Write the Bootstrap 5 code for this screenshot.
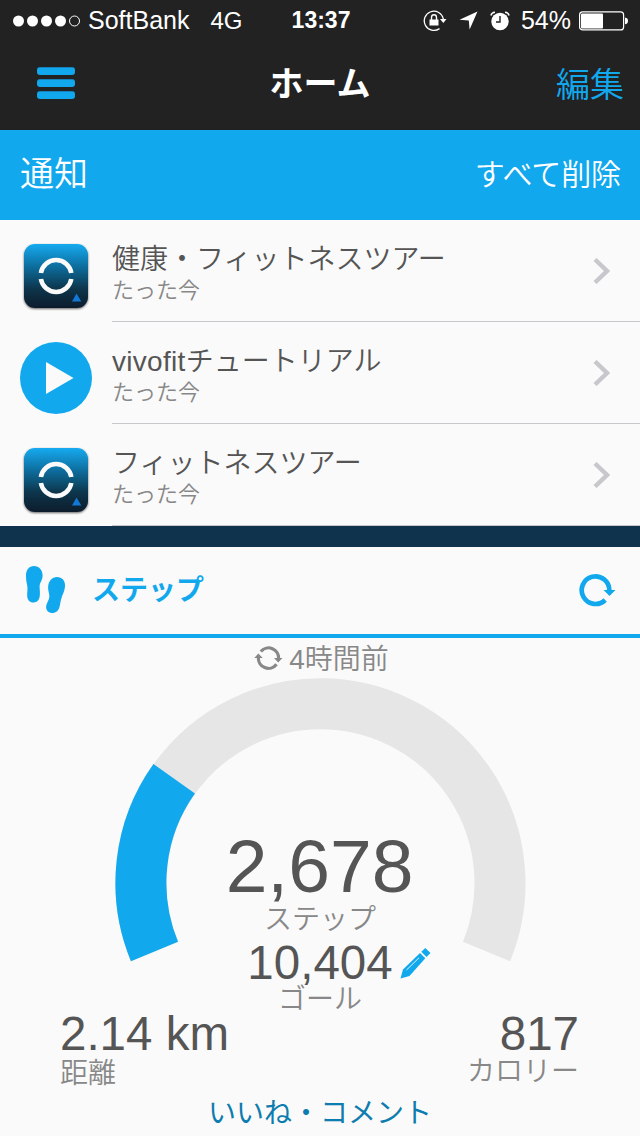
<!DOCTYPE html>
<html lang="ja">
<head>
<meta charset="utf-8">
<meta name="viewport" content="width=device-width, initial-scale=1">
<title>ホーム</title>
<link href="https://cdn.jsdelivr.net/npm/bootstrap@5.3.0/dist/css/bootstrap.min.css" rel="stylesheet">
<style>
:root { --sky: #11a8ee; --ink: #555; --soft: #888; --paper: #fafafa; --bar: #222; }
body { font-family: "Liberation Sans", "Noto Sans CJK JP", sans-serif; background: var(--paper); color: var(--ink); height: 1136px; overflow: hidden; font-size: 28px; line-height: 1; }
svg { display: block; flex: none; }
.jp-light { font-weight: 350; }
.statusbar { height: 40px; background: var(--bar); color: #fff; font-size: 24px; padding: 1px 11px 0 13px; }
.statusbar .side { flex: 1 1 0; }
.carrier { font-size: 25px; margin-left: 7px; }
.network { margin-left: 21px; }
.clock { font-size: 23px; }
.status-icons { gap: 12px; margin-right: 11px; }
.charge { font-size: 25px; margin-right: 8px; }
.topbar { height: 90px; background: var(--bar); padding: 0 16px 5px; }
.topbar .side { flex: 1 1 0; }
.topbar h1 { font-size: 34px; font-weight: 700; color: #fff; padding-top: 3px; }
.edit { font-size: 34px; color: var(--sky); padding-top: 4px; }
.burger { margin-left: 21px; }
.burger span { display: block; width: 38px; height: 8px; border-radius: 3px; background: var(--sky); border-top: 1px solid #1583bb; }
.notice-head { height: 90px; background: var(--sky); color: #fff; padding: 0 19px 3px 20px; font-size: 34px; }
.notice-head .clear-all { font-size: 30px; margin-top: 3px; letter-spacing: -.1px; }
.notice { height: 102px; padding-left: 20px; }
.notice .thumb { width: 72px; margin-right: 20px; padding-top: 20px; }
.notice .copy { height: 102px; border-bottom: 1px solid #c8c7cc; padding: 26px 30px 0 0; }
.notice .when { font-size: 22px; color: var(--soft); margin-top: 6px; }
.notice .chevron { margin-top: 12px; }
.latin { letter-spacing: .3px; }
.divider { height: 21px; background: #10334d; }
.step-head { height: 91px; border-bottom: 4px solid var(--sky); padding: 0 24px 2px 25px; color: var(--sky); }
.step-head h2 { font-size: 28px; font-weight: 700; margin-left: 26px; padding-top: 3px; }
.soft { color: var(--soft); }
.synced { height: 40px; gap: 6px; padding-left: 3px; }
.synced span { padding-top: 3px; }
.dial { display: grid; height: 332px; }
.dial > * { grid-area: 1 / 1; }
.readout { padding-top: 150px; }
.count { font-size: 75px; height: 78px; line-height: 76px; padding-right: 1px; }
.goal { display: grid; grid-template-columns: 1fr auto 1fr; align-items: center; font-size: 47.5px; height: 48px; line-height: 48px; margin-top: 5px; }
.goal-number { grid-column: 2; }
.goal-label { margin-top: -1px; }
.pencil { margin-left: 7px; }
.totals { padding: 0 61px 0 60px; height: 80px; }
.totals .figure { font-size: 47.500px; line-height: 48px; }
.distance { padding-top: 2px; }
.social { color: #0d7cae; height: 46px; padding-top: 2px; }
</style>
</head>
<body>
<header>
  <div class="statusbar d-flex align-items-center">
    <div class="side d-flex align-items-center">
      <svg width="68" height="12" fill="#fff"><circle cx="5.5" cy="6" r="5.5"/><circle cx="19.5" cy="6" r="5.5"/><circle cx="33.5" cy="6" r="5.5"/><circle cx="47.5" cy="6" r="5.5"/><circle cx="61.5" cy="6" r="5" fill="none" stroke="#fff"/></svg>
      <span class="carrier">SoftBank</span><span class="network">4G</span>
    </div>
    <strong class="clock">13:37</strong>
    <div class="side d-flex align-items-center justify-content-end">
      <div class="status-icons d-flex align-items-center">
        <svg width="24" height="22" viewBox="0 0 24 22" fill="none" stroke="#fff"><path d="M20.300 9A9.600 9.600 0 1 0 16.500 18.600" stroke-width="1.300"/><path d="M17 9h6.500l-3.200 4z" fill="#fff" stroke="none"/><rect x="6.500" y="9.500" width="9" height="6" fill="#fff" stroke="none"/><path d="M8.500 10V7.500a2.500 2.700 0 0 1 5 0V10" stroke-width="1.400"/></svg>
        <svg width="19" height="19" viewBox="0 0 19 19" fill="#fff"><path d="M18.500.5 10.600 18.500 9.800 9.500.5 8.800z"/></svg>
        <svg width="20" height="20" viewBox="0 0 20 20"><circle cx="10" cy="10.500" r="8.700" fill="#fff"/><path d="M10 5v6H6" fill="none" stroke="#222" stroke-width="1.400"/><path d="M.9 4.500Q1.500 1.500 5 1.200M19.100 4.500Q18.500 1.500 15 1.200" fill="none" stroke="#fff" stroke-width="1.400"/></svg>
      </div>
      <span class="charge">54%</span>
      <svg width="50" height="20" viewBox="0 0 50 20"><rect x=".6" y=".9" width="44" height="18" rx="3" fill="none" stroke="#fff" stroke-width="1.200"/><rect x="2" y="2.500" width="22" height="15" rx="1" fill="#fff"/><path d="M46 6.500q3 .5 3 3.400t-3 3.400z" fill="#fff"/></svg>
    </div>
  </div>
  <nav class="topbar d-flex align-items-center">
    <div class="side"><div class="burger d-flex flex-column gap-1"><span></span><span></span><span></span></div></div>
    <h1 class="mb-0">ホーム</h1>
    <div class="side text-end edit jp-light">編集</div>
  </nav>
</header>
<main>
  <section>
    <div class="notice-head jp-light d-flex align-items-center justify-content-between"><span>通知</span><span class="clear-all">すべて削除</span></div>
    <div class="notice d-flex">
      <div class="thumb">
        <svg width="72" height="72" viewBox="0 0 72 72"><defs><linearGradient id="tile" x2="0" y2="1"><stop stop-color="#12aaf1"/><stop offset=".35" stop-color="#116e9e"/><stop offset=".7" stop-color="#10354b"/><stop offset="1" stop-color="#0b1c2b"/></linearGradient><filter id="shade" x="-10%" y="-10%" width="120%" height="125%"><feDropShadow dx="0" dy="1" stdDeviation="1.200" flood-color="#000" flood-opacity=".6"/></filter>
        <symbol id="tour" viewBox="0 0 72 72"><rect x="4" y="4" width="64" height="64" rx="11" fill="url(#tile)" filter="url(#shade)"/><path d="M20.900 33A15.400 15.400 0 0 1 51.300 33M20.900 39A15.400 15.400 0 0 0 51.300 39" fill="none" stroke="#fafafa" stroke-width="4.600"/><path d="M56.500 53.500 61.300 61.500H52z" fill="#1278d8"/></symbol></defs><use href="#tour"/></svg>
      </div>
      <div class="copy flex-grow-1 d-flex justify-content-between">
        <div class="jp-light"><div>健康・フィットネスツアー</div><div class="when">たった今</div></div>
        <svg class="chevron" width="17" height="26" viewBox="0 0 17 26" fill="none" stroke="#c8c7cc" stroke-width="4.400"><path d="m2 1.500 12 11.500L2 24.500"/></svg>
      </div>
    </div>
    <div class="notice d-flex">
      <div class="thumb"><svg width="72" height="72" viewBox="0 0 72 72"><circle cx="36" cy="36" r="36" fill="#11a8ee"/><path d="M26 20 53.500 36 26 52z" fill="#fafafa"/></svg></div>
      <div class="copy flex-grow-1 d-flex justify-content-between">
        <div class="jp-light"><div><span class="latin">vivofit</span>チュートリアル</div><div class="when">たった今</div></div>
        <svg class="chevron" width="17" height="26" viewBox="0 0 17 26" fill="none" stroke="#c8c7cc" stroke-width="4.400"><path d="m2 1.500 12 11.500L2 24.500"/></svg>
      </div>
    </div>
    <div class="notice d-flex">
      <div class="thumb"><svg width="72" height="72" viewBox="0 0 72 72"><use href="#tour"/></svg></div>
      <div class="copy flex-grow-1 d-flex justify-content-between">
        <div class="jp-light"><div>フィットネスツアー</div><div class="when">たった今</div></div>
        <svg class="chevron" width="17" height="26" viewBox="0 0 17 26" fill="none" stroke="#c8c7cc" stroke-width="4.400"><path d="m2 1.500 12 11.500L2 24.500"/></svg>
      </div>
    </div>
  </section>
  <div class="divider"></div>
  <section>
    <div class="step-head d-flex align-items-center">
      <svg width="41" height="48" viewBox="0 0 41 48" fill="#11a8ee"><path d="M9 0C14 0 17.600 4 17.600 9.500c0 5-3 7-3 11 0 3.500.6 5 .2 9C14.500 33.500 12.500 36.500 8.500 36.500S2.500 34 2.200 30C2 26 3 23 2.200 19.500 1.500 16 1 13.500 1 9.500 1 4 4 0 9 0z"/><path d="M32 11c5 0 8.500 3.800 8 9.500-.4 4.500-2 7-3.200 10.500-1.300 3.500-1.300 6-2.300 10-1 4-4 6.200-7.500 6-4.500-.3-6.600-4-5.700-7.500.7-3.500 2.700-5 3-8.500.3-4-1.600-6-1.100-11C23.700 15 27 11 32 11z"/></svg>
      <h2 class="mb-0 me-auto">ステップ</h2>
      <svg width="37" height="34" viewBox="0 0 37 34"><path d="M30.300 17.500A13.800 13.800 0 1 0 26.200 27" fill="none" stroke="#11a8ee" stroke-width="4.700"/><path d="M24.500 17h12l-6 6z" fill="#11a8ee"/></svg>
    </div>
    <div class="synced soft jp-light d-flex align-items-center justify-content-center">
      <svg width="29" height="24" viewBox="0 0 29 24"><path d="M6.800 5.600A10 10 0 0 1 24.500 13M22.500 18.200A10 10 0 0 1 4.500 11" fill="none" stroke="#888" stroke-width="3.200"/><path d="M20 12h8.500l-4.300 4.500zM.3 12h8.500L4.300 7.500z" fill="#888"/></svg>
      <span>4時間前</span>
    </div>
    <div class="dial">
      <svg class="mx-auto" width="412" height="290" viewBox="0 0 412 290" fill="none" stroke-width="51"><path d="M40.500 273.500A179.500 179.500 0 1 1 372.500 273.500" stroke="#e6e6e6"/><path d="M40.500 273.500A179.500 179.500 0 0 1 60.200 100.800" stroke="#11a8ee"/></svg>
      <div class="readout text-center">
        <div class="count">2,678</div>
        <div class="soft jp-light">ステップ</div>
        <div class="goal"><span class="goal-number">10,404</span>
          <svg class="pencil" width="31" height="31" viewBox="0 0 31 31"><path d="m20 5 5.300 5.300L9.500 28 .5 30.500 3 21.500z" fill="#11a8ee"/><path d="m21.300 3.800 4-3.800 5.200 5-4 4z" fill="#11a8ee"/><path d="M6.500 22 19 9.800" stroke="#fafafa" stroke-width=".9"/></svg>
        </div>
        <div class="soft jp-light goal-label">ゴール</div>
      </div>
    </div>
    <div class="totals d-flex justify-content-between">
      <div><div class="figure">2.14 km</div><div class="soft jp-light distance">距離</div></div>
      <div class="text-end"><div class="figure">817</div><div class="soft jp-light">カロリー</div></div>
    </div>
    <div class="social d-flex align-items-center justify-content-center">いいね・コメント</div>
  </section>
</main>
<script src="https://cdn.jsdelivr.net/npm/bootstrap@5.3.0/dist/js/bootstrap.bundle.min.js"></script>
</body>
</html>
